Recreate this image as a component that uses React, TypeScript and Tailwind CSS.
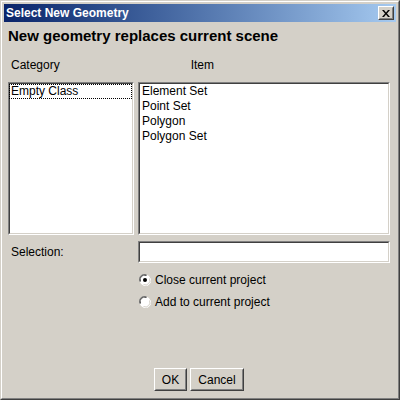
import React from "react";

const font = { fontFamily: '"Liberation Sans", Arial, sans-serif' };

function Sunken({ className, children }: { className?: string; children?: React.ReactNode }) {
  return (
    <div className={"border border-t-[#808080] border-l-[#808080] border-r-white border-b-white " + (className ?? "")}>
      <div className="h-full w-full border border-t-[#404040] border-l-[#404040] border-r-[#d4d0c8] border-b-[#d4d0c8] bg-white">
        {children}
      </div>
    </div>
  );
}

function Radio({ checked }: { checked?: boolean }) {
  return (
    <svg width="12" height="12" viewBox="0 0 12 12" className="shrink-0">
      <circle cx="6" cy="6" r="5.5" fill="#ffffff" stroke="none" />
      <path d="M0.5 7.5 A5.5 5.5 0 0 1 7.5 0.5" fill="none" stroke="#808080" strokeWidth="1" />
      <path d="M1.5 7.5 A4.5 4.5 0 0 1 7.5 1.5" fill="none" stroke="#404040" strokeWidth="1" />
      <path d="M4.5 11.5 A5.5 5.5 0 0 0 11.5 4.5" fill="none" stroke="#ffffff" strokeWidth="1" />
      <path d="M4.5 10.5 A4.5 4.5 0 0 0 10.5 4.5" fill="none" stroke="#d4d0c8" strokeWidth="1" />
      {checked && <circle cx="6" cy="6" r="2" fill="#000" />}
    </svg>
  );
}

function Button({ label, w }: { label: string; w: string }) {
  return (
    <div className={"border border-t-white border-l-white border-r-[#404040] border-b-[#404040] " + w}>
      <div className="flex h-[21px] items-center justify-center border border-t-[#d4d0c8] border-l-[#d4d0c8] border-r-[#808080] border-b-[#808080] text-[12px] text-black">
        {label}
      </div>
    </div>
  );
}

export default function App() {
  return (
    <div style={font} className="h-[400px] w-[400px] border border-t-[#d4d0c8] border-l-[#d4d0c8] border-r-[#404040] border-b-[#404040] bg-[#d4d0c8] text-black">
      <div className="flex h-full w-full flex-col border border-t-white border-l-white border-r-[#808080] border-b-[#808080] p-[2px]">
        {/* Title bar */}
        <div className="flex h-[18px] shrink-0 items-center justify-between bg-gradient-to-r from-[#0a246a] to-[#a6caf0] pl-[2px] pr-[2px]">
          <span className="text-[12px] font-bold leading-[18px] text-white">Select New Geometry</span>
          <div className="border border-t-white border-l-white border-r-[#404040] border-b-[#404040]">
            <div className="flex h-[12px] w-[14px] items-center justify-center border border-t-[#d4d0c8] border-l-[#d4d0c8] border-r-[#808080] border-b-[#808080] bg-[#d4d0c8]">
              <svg width="8" height="7" viewBox="0 0 8 7">
                <path d="M0 0h2l2 2.5L6 0h2L5 3.5 8 7H6L4 4.5 2 7H0l3-3.5z" fill="#000" />
              </svg>
            </div>
          </div>
        </div>

        {/* Content */}
        <div className="flex flex-1 flex-col pl-[4px] pr-[6px]">
          <div className="mt-[5px] text-[15px] font-bold leading-[17px]">New geometry replaces current scene</div>

          <div className="mt-[14px] flex text-[12px] leading-[14px]">
            <span className="ml-[3px]">Category</span>
            <span className="ml-[131px]">Item</span>
          </div>

          <div className="mt-[10px] flex h-[153px] gap-[4px] text-[12px] leading-[15px]">
            <Sunken className="w-[126px]">
              <div className="ml-[-1px] border border-dotted border-black pl-[1px] leading-[13px]">Empty Class</div>
            </Sunken>
            <Sunken className="flex-1">
              <div className="pl-[2px]">
                <div>Element Set</div>
                <div>Point Set</div>
                <div>Polygon</div>
                <div>Polygon Set</div>
              </div>
            </Sunken>
          </div>

          <div className="mt-[6px] flex items-center text-[12px] leading-[14px]">
            <span className="ml-[3px] w-[127px]">Selection:</span>
            <Sunken className="h-[22px] flex-1" />
          </div>

          <div className="ml-[131px] mt-[11px] flex flex-col gap-[10px] text-[12px] leading-[12px]">
            <div className="flex items-center gap-[4px]">
              <Radio checked />
              <span>Close current project</span>
            </div>
            <div className="flex items-center gap-[4px]">
              <Radio />
              <span>Add to current project</span>
            </div>
          </div>

          <div className="flex-1" />

          <div className="mb-[5px] flex justify-center gap-[3px]">
            <Button label="OK" w="w-[33px]" />
            <Button label="Cancel" w="w-[54px]" />
          </div>
        </div>
      </div>
    </div>
  );
}
